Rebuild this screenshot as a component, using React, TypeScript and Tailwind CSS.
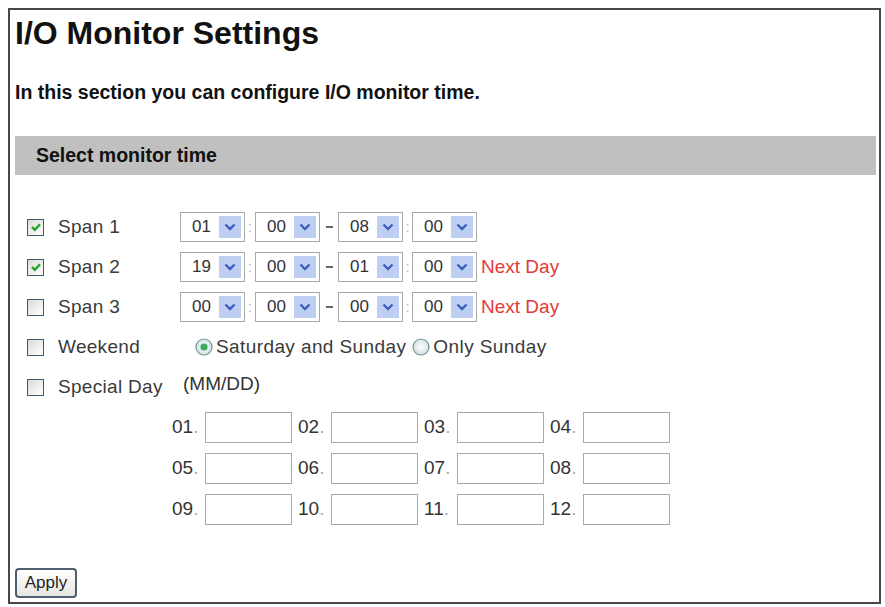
import React from "react";

const font = { fontFamily: '"Liberation Sans", Arial, sans-serif' };

function Checkbox({ checked }: { checked?: boolean }) {
  return (
    <div className="w-[17px] h-[17px] border border-[#3f5b6e] bg-gradient-to-br from-[#dcdcd6] to-white flex items-center justify-center shrink-0">
      {checked && (
        <svg width="12" height="12" viewBox="0 0 12 12">
          <polyline points="2,6 4.8,8.8 10,3.2" fill="none" stroke="#22a322" strokeWidth="2.4" />
        </svg>
      )}
    </div>
  );
}

function Radio({ checked }: { checked?: boolean }) {
  return (
    <svg width="18" height="18" viewBox="0 0 18 18" className="shrink-0">
      <defs>
        <radialGradient id="rg" cx="50%" cy="50%" r="50%">
          <stop offset="0%" stopColor="#ffffff" />
          <stop offset="100%" stopColor="#d5e0e6" />
        </radialGradient>
      </defs>
      <circle cx="9" cy="9" r="8" fill="url(#rg)" stroke="#6f9a95" strokeWidth="1.2" />
      {checked && <circle cx="9" cy="9" r="3.6" fill="#3fae5a" />}
    </svg>
  );
}

function Select({ value }: { value: string }) {
  return (
    <div className="w-[65px] h-[30px] border border-[#a9a9a9] bg-white flex items-center justify-between pl-[11px] pr-[3px] shrink-0">
      <span className="text-[17px] text-[#333]">{value}</span>
      <div className="w-[22px] h-[22px] bg-[#bfcff3] flex items-center justify-center">
        <svg width="12" height="8" viewBox="0 0 12 8">
          <polyline points="1.5,1.5 6,6 10.5,1.5" fill="none" stroke="#3d5fbf" strokeWidth="2.4" />
        </svg>
      </div>
    </div>
  );
}

function Colon({ w }: { w: string }) {
  return <div className={`${w} flex justify-center text-[14px] text-[#b5b5b5] leading-none`}>:</div>;
}

function SpanRow({ label, checked, vals, nextDay }: { label: string; checked?: boolean; vals: string[]; nextDay?: boolean }) {
  return (
    <div className="h-[30px] flex items-center">
      <div className="w-[170px] flex items-center pl-[17px]">
        <Checkbox checked={checked} />
        <span className="ml-[14px] text-[19px] tracking-[0.3px] text-[#3a3a3a]">{label}</span>
      </div>
      <Select value={vals[0]} />
      <Colon w="w-[10px]" />
      <Select value={vals[1]} />
      <div className="w-[18px] flex justify-center">
        <div className="w-[7px] h-[1.5px] bg-[#666]" />
      </div>
      <Select value={vals[2]} />
      <Colon w="w-[9px]" />
      <Select value={vals[3]} />
      {nextDay && <span className="ml-[4px] text-[19px] text-[#e23a3a]">Next Day</span>}
    </div>
  );
}

function DateCell({ n }: { n: string }) {
  return (
    <div className="flex items-center">
      <span className="w-[33px] text-[19px] text-[#333]">
        {n}
        <span className="text-[#aaa]">.</span>
      </span>
      <div className="w-[87px] h-[31px] border border-[#a8a8a8] bg-white" />
    </div>
  );
}

export default function App() {
  const dates = ["01", "02", "03", "04", "05", "06", "07", "08", "09", "10", "11", "12"];
  return (
    <div className="w-[885px] h-[607px] bg-white pt-[8px] pl-[8px]" style={font}>
      <div className="w-[873px] h-[596px] border-2 border-[#474747] flex flex-col text-[#1a1a1a]">
        <div className="h-[42px] mt-[2px] flex items-center pl-[5px]">
          <h1 className="text-[32px] font-bold text-[#111]">I/O Monitor Settings</h1>
        </div>
        <div className="h-[30px] mt-[24px] flex items-center pl-[5px]">
          <p className="text-[19.5px] font-bold text-[#111]">In this section you can configure I/O monitor time.</p>
        </div>
        <div className="h-[39px] mt-[28px] ml-[5px] mr-[3px] bg-[#c0c0c0] flex items-center pl-[21px]">
          <span className="text-[19.5px] font-bold text-[#111]">Select monitor time</span>
        </div>

        <div className="mt-[37px] flex flex-col gap-[10px]">
          <SpanRow label="Span 1" checked vals={["01", "00", "08", "00"]} />
          <SpanRow label="Span 2" checked vals={["19", "00", "01", "00"]} nextDay />
          <SpanRow label="Span 3" vals={["00", "00", "00", "00"]} nextDay />
          <div className="h-[30px] flex items-center">
            <div className="w-[170px] flex items-center pl-[17px]">
              <Checkbox />
              <span className="ml-[14px] text-[19px] tracking-[0.3px] text-[#3a3a3a]">Weekend</span>
            </div>
            <div className="ml-[15px] flex items-center">
              <Radio checked />
              <span className="ml-[3px] text-[19px] tracking-[0.4px] text-[#3a3a3a]">Saturday and Sunday</span>
              <div className="ml-[6px]">
                <Radio />
              </div>
              <span className="ml-[3px] text-[19px] tracking-[0.4px] text-[#3a3a3a]">Only Sunday</span>
            </div>
          </div>
          <div className="h-[30px] flex items-center">
            <div className="w-[170px] flex items-center pl-[17px]">
              <Checkbox />
              <span className="ml-[14px] text-[19px] tracking-[0.3px] text-[#3a3a3a]">Special Day</span>
            </div>
            <span className="ml-[3px] self-start leading-[24px] text-[19px] text-[#333]">(MM/DD)</span>
          </div>
        </div>

        <div className="mt-[10px] pl-[162px] grid grid-cols-[repeat(4,120px)] gap-x-[6px] gap-y-[10px]">
          {dates.map((d) => (
            <DateCell key={d} n={d} />
          ))}
        </div>

        <div className="mt-auto mb-[4px] ml-[5px]">
          <button className="w-[62px] h-[30px] rounded-[4px] border-2 border-[#4f5f70] bg-gradient-to-b from-white to-[#e6e6e0] text-[17px] text-[#222]">
            Apply
          </button>
        </div>
      </div>
    </div>
  );
}
